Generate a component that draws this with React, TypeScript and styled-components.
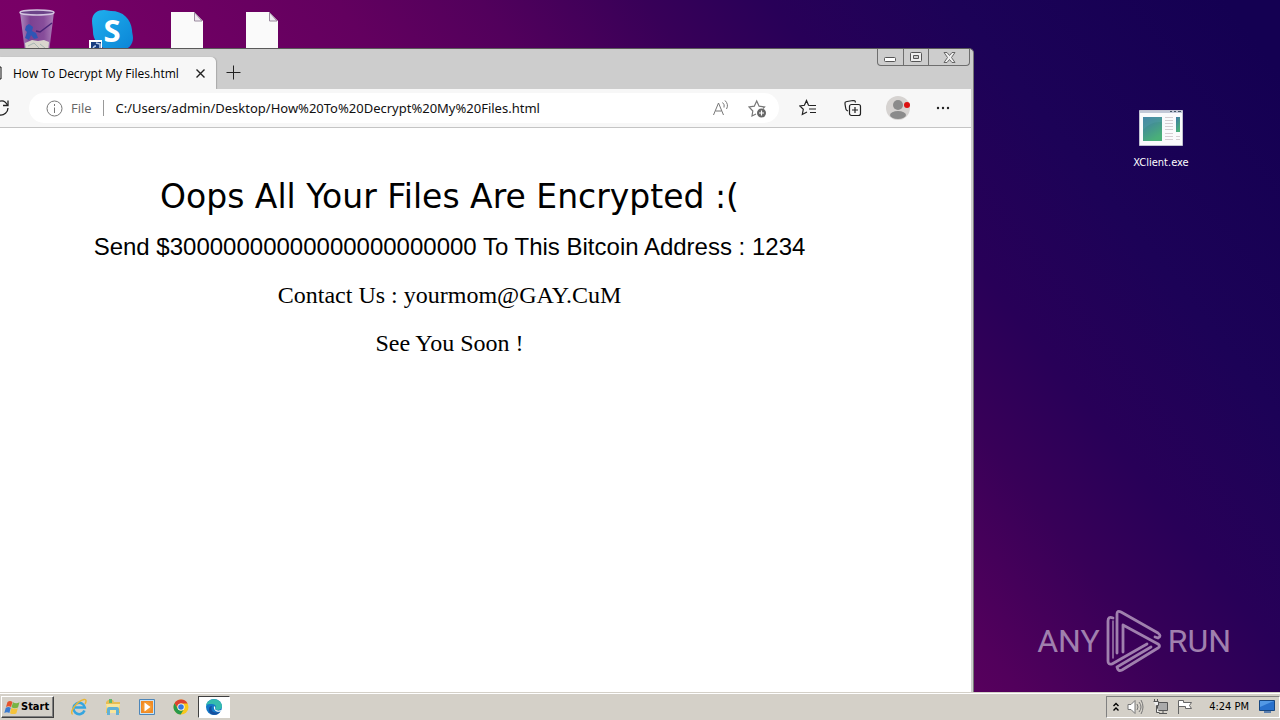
import React from 'react';
import styled, { createGlobalStyle } from 'styled-components';

const Global = createGlobalStyle`
  * { box-sizing: border-box; }
  body { margin: 0; font-family: "Open Sans", sans-serif; font-size: 12px; color: #000; }
  button { font: inherit; color: inherit; border: 0; padding: 0; background: none; }
  svg { display: block; flex-shrink: 0; }
`;

const Screen = styled.div`
  display: flex;
  flex-direction: column;
  height: 100vh;
  overflow: hidden;
`;

const Desktop = styled.main`
  position: relative;
  flex: 1;
  overflow: hidden;
  background: linear-gradient(52deg, #820068 0%, #780066 31%, #63005f 48%, #52005c 56%, #380058 65%, #280058 72%, #1c0257 82%, #140052 97%);
`;

const IconRow = styled.div`
  position: absolute;
  top: 8px;
  left: 16px;
  display: flex;
  gap: 33px;
`;

const IconCell = styled.button`
  display: flex;
  flex-direction: column;
  align-items: center;
  width: 42px;
`;

const AppShortcut = styled.button`
  position: absolute;
  top: 110px;
  right: 90px;
  display: flex;
  flex-direction: column;
  align-items: center;
  gap: 9px;
  width: 58px;
  color: #fff;
  font: 11px/16px "DejaVu Sans Condensed", sans-serif;
`;

const Watermark = styled.div`
  position: absolute;
  right: 49px;
  bottom: 19px;
  display: flex;
  align-items: center;
  gap: 5px;
  color: #a080ae;
  font: 32px/62px Roboto, sans-serif;
`;

const Window = styled.section`
  position: absolute;
  top: 48px;
  bottom: 0;
  left: 0;
  right: 306px;
  display: flex;
  flex-direction: column;
  background: #cdcdcd;
  border-top: 1px solid #5a5a5a;
  border-right: 1px solid #777;
  border-top-right-radius: 5px;
  padding-right: 2px;
`;

const TitleBar = styled.header`
  display: flex;
  height: 40px;
  align-items: flex-end;
`;

const Tab = styled.div`
  display: flex;
  align-items: center;
  width: 216px;
  height: 32px;
  background: #f7f7f7;
  border-top-right-radius: 5px;
  box-shadow: 1px 0 1px #aaa;
`;

const TabTitle = styled.span`
  flex: 1;
  padding-left: 11px;
  white-space: nowrap;
`;

const NewTab = styled.button`
  align-self: flex-end;
  padding: 0 0 9px 10px;
`;

const TabClose = styled.button`
  padding-right: 11px;
`;

const WindowButtons = styled.div`
  display: flex;
  align-self: flex-start;
  margin-left: auto;
  margin-right: 1px;
  border: 1px solid #6e6e6e;
  border-top: 0;
  border-radius: 0 0 4px 4px;
`;

const WindowButton = styled.button<{ $wide?: boolean }>`
  display: flex;
  align-items: center;
  justify-content: center;
  width: ${(p) => (p.$wide ? 41 : 25)}px;
  height: 16px;
  & + & { border-left: 1px solid #6e6e6e; }
`;

const Toolbar = styled.div`
  display: flex;
  align-items: center;
  height: 39px;
  background: #f7f7f7;
  border-bottom: 1px solid #c4c4c4;
`;

const AddressBar = styled.div`
  display: flex;
  flex: 1;
  align-items: center;
  height: 30px;
  margin-left: 19px;
  padding: 0 11px 0 17px;
  border-radius: 15px;
  background: #fff;
  color: #666;
  font-size: 13px;
`;

const Scheme = styled.span`
  margin-left: 8px;
  padding-right: 11px;
  border-right: 1px solid #999;
  line-height: 16px;
`;

const AddressInput = styled.input`
  flex: 1;
  min-width: 0;
  margin-left: 12px;
  padding: 0;
  border: 0;
  outline: 0;
  background: none;
  color: #111;
  font: 13px/20px "Noto Sans", sans-serif;
`;

const AddressActions = styled.div`
  display: flex;
  gap: 14px;
`;

const Tools = styled.div`
  display: flex;
  align-items: center;
  gap: 23px;
  padding: 0 17px 0 18px;
`;

const ToolButton = styled.button`
  display: flex;
  align-items: center;
  justify-content: center;
  width: 22px;
  height: 24px;
`;

const Page = styled.article`
  flex: 1;
  padding: 45px 72px 0 0;
  background: #fff;
  text-align: center;
`;

const Headline = styled.h1`
  margin: 0;
  font: 33px/48px "DejaVu Sans", sans-serif;
`;

const Demand = styled.p`
  margin: 2px 0 0;
  font: 24px/48px "Liberation Sans", sans-serif;
`;

const Note = styled.p`
  margin: 0;
  font: 24px/48px "Liberation Serif", serif;
`;

const Taskbar = styled.footer`
  display: flex;
  align-items: center;
  justify-content: space-between;
  height: 28px;
  padding: 2px 0 0 1px;
  background: #d4d0c8;
  box-shadow: inset 0 1px #d4d0c8, inset 0 2px #fff;
`;

const TaskGroup = styled.div`
  display: flex;
  align-items: center;
`;

const StartButton = styled.button`
  display: flex;
  align-items: center;
  gap: 1px;
  width: 53px;
  height: 22px;
  margin-right: 8px;
  padding-left: 2px;
  border: 1px solid;
  border-color: #fff #404040 #404040 #fff;
  box-shadow: inset -1px -1px #808080;
  font: bold 11px/16px "DejaVu Sans Condensed", sans-serif;
`;

const TaskButton = styled.button<{ $active?: boolean }>`
  display: flex;
  align-items: center;
  justify-content: center;
  width: ${(p) => (p.$active ? 32 : 34)}px;
  height: 22px;
  background: ${(p) => (p.$active ? '#fff' : 'none')};
  border: ${(p) => (p.$active ? '1px solid' : '0')};
  border-color: #404040 #fff #fff #404040;
`;

const Tray = styled.div`
  display: flex;
  align-items: center;
  gap: 8px;
  height: 22px;
  padding: 0 4px 0 6px;
  border: 1px solid;
  border-color: #808080 #fff #fff #808080;
  font: 11px/16px "DejaVu Sans Condensed", sans-serif;
`;

const Clock = styled.time`
  margin: 0 2px 0 8px;
  white-space: nowrap;
`;

const RecycleBin = () => (
  <svg width="42" height="44" viewBox="0 0 42 44">
    <defs>
      <linearGradient id="glass" x1="0" x2="1">
        <stop offset="0" stopColor="#b9a3cf" />
        <stop offset=".3" stopColor="#7d4d99" />
        <stop offset=".7" stopColor="#8a5ba4" />
        <stop offset="1" stopColor="#b597c8" />
      </linearGradient>
    </defs>
    <path d="M4 4h34L33 44H9z" fill="url(#glass)" opacity=".85" />
    <path d="M10 18l3-2 4 3-1 4 4 2 2 5-4 1-3-4-2 5-4-2 2-6-2-2z" fill="#2f55b5" />
    <path d="M20 23l4 1 12-9" fill="none" stroke="#4a2478" strokeWidth="1.500" />
    <path d="M9 35l7-3 6 1 6-1 5 2-1 10H10z" fill="#d9d6ce" />
    <path d="M12 38l6-3 5 5M24 36l5 4" fill="none" stroke="#a8b7b4" />
    <ellipse cx="21" cy="4.500" rx="17" ry="2.500" fill="#6c4489" stroke="#d3c3df" strokeWidth="1.500" />
  </svg>
);

const Skype = () => (
  <svg width="46" height="42" viewBox="0 0 46 42" fontFamily="Open Sans" fontWeight="700">
    <defs>
      <linearGradient id="sky" x2="1" y2="1">
        <stop offset="0" stopColor="#1fb0ee" />
        <stop offset="1" stopColor="#0b84d6" />
      </linearGradient>
    </defs>
    <path d="M3 13C3 5 9 2 15 2c3 0 4 1 7 1 12 0 20 8 21 19 0 3 1 5 1 8 0 7-5 12-12 12H18C9 38 4 31 4 24c0-4-1-7-1-11z" fill="url(#sky)" />
    <text x="23" y="34" fontSize="31" fill="#fff" textAnchor="middle">S</text>
    <path d="M0 32h13v10H0z" fill="#fff" />
    <path d="M2 34h10v8H2z" fill="#173d80" />
    <path d="M4 42c0-3 1-4 3-4M7 35l4 1v4" fill="none" stroke="#b8cdea" strokeWidth="1.500" />
  </svg>
);

const FileIcon = () => (
  <svg width="32" height="44" viewBox="0 0 32 44">
    <path d="M0 4h23l9 9v31H0z" fill="#fafafa" />
    <path d="M23.500 4.500V13H31z" fill="#eee9f0" stroke="#9a8a9e" />
  </svg>
);

const ExeIcon = () => (
  <svg width="44" height="36" viewBox="0 0 44 36">
    <defs>
      <linearGradient id="exe" x1="0" y1="0" x2=".5" y2="1">
        <stop offset="0" stopColor="#3e78a8" />
        <stop offset="1" stopColor="#4ab078" />
      </linearGradient>
    </defs>
    <path d="M.5.5h43v35H.5z" fill="#fafafc" stroke="#bfc0d0" />
    <path d="M1 1h42v2H1z" fill="#c3c9d8" />
    <path d="M31 1.500h2M35 1.500h2M39 1.500h3" stroke="#456" />
    <path d="M4 7h19v24H4z" fill="url(#exe)" />
    <path d="M4 20Q12 11 23 12V7H4z" fill="#549fa7" opacity=".4" />
    <path d="M26 7.500h8M26 10.500h8M26 13.500h8M26 16.500h8M26 19.500h8M26 23.500h8M26 26.500h8M26 29.500h8M37 26.500h4M37 29.500h4" stroke="#d5ced2" />
    <path d="M37 7h4v15h-4z" fill="url(#exe)" />
  </svg>
);

const PlayLogo = () => (
  <svg width="58" height="64" viewBox="0 0 58 64" fill="none" stroke="#a080ae" strokeWidth="2.800" strokeLinejoin="round" strokeLinecap="round">
    <path d="M8 9Q3 7 3 12V52Q3 56 7 55L42 35" />
    <path d="M8 12V49" strokeWidth="1.500" />
    <path d="M12 44V5Q12 1 16 3L53 24Q57 27 53 29L50 28" />
    <path d="M18 43V16L53 35Q56 37 53 39L17 61Q13 63 12 58L46 38" />
  </svg>
);

const Reload = () => (
  <svg width="10" height="20" viewBox="0 0 10 20" fill="none" stroke="#222" strokeWidth="1.300">
    <path d="M0 3.200c3-1 6 1 7.500 4M8 10c0 4-4 7.500-8 7" /><path d="M8 2.500v5H3" />
  </svg>
);

const Explorer = () => (
  <svg width="18" height="18" viewBox="0 0 18 18">
    <path d="M2 4l2-2h5l1 2h6v11H2z" fill="#e8bd54" />
    <path d="M2 6h14l-1 9H3z" fill="#f9e59b" />
    <path d="M3 17V11q0-2 2-2h8q2 0 2 2v6h-3v-5H6v5z" fill="#62b1d5" />
    <path d="M5 1h3v4H5z" fill="#64b769" />
  </svg>
);

const TASKS = [
  {
    name: 'Internet Explorer',
    art: (
      <svg width="18" height="18" viewBox="0 0 18 18" fill="none">
        <path d="M14.500 12.500A5.700 5.700 0 1 1 14.800 9.500H5" stroke="#35a5df" strokeWidth="2.500" />
        <path d="M2.500 16.500C-1 14 7 3 14 1.500c3-.5 2 3 1 4.500" stroke="#e9b634" strokeWidth="1.500" />
      </svg>
    ),
  },
  { name: 'Explorer', art: <Explorer /> },
  {
    name: 'Media Player',
    art: (
      <svg width="18" height="18" viewBox="0 0 18 18">
        <path d="M1.500 1.500h15v15h-15z" fill="#c8e3f5" stroke="#4d86b9" />
        <path d="M3 3h12v12H3z" fill="#f08a24" />
        <circle cx="9" cy="9" r="5" fill="#f59a30" /><path d="M6.500 4.500l6 4.500-6 4.500z" fill="#fff" />
      </svg>
    ),
  },
  {
    name: 'Chrome',
    art: (
      <svg width="16" height="16" viewBox="0 0 16 16">
        <circle cx="8" cy="8" r="7.500" fill="#f8c81c" />
        <path d="M1.500 4.200A7.500 7.500 0 0 1 14.600 4.500H8A3.500 3.500 0 0 0 5 10z" fill="#dc4132" />
        <path d="M1.500 4.200A7.500 7.500 0 0 0 7.700 15.500L11 10a3.500 3.500 0 0 1-6 0z" fill="#27994c" />
        <circle cx="8" cy="8" r="3.600" fill="#fff" /><circle cx="8" cy="8" r="2.800" fill="#3478df" />
      </svg>
    ),
  },
];

export default function App() {
  return (
    <Screen>
      <Global />
      <Desktop>
        <IconRow>
          <IconCell aria-label="Recycle Bin"><RecycleBin /></IconCell>
          <IconCell aria-label="Skype"><Skype /></IconCell>
          <IconCell aria-label="Document"><FileIcon /></IconCell>
          <IconCell aria-label="Document"><FileIcon /></IconCell>
        </IconRow>
        <AppShortcut><ExeIcon />XClient.exe</AppShortcut>
        <Watermark><span>ANY</span><PlayLogo /><span>RUN</span></Watermark>
        <Window>
          <TitleBar>
            <Tab>
              <svg width="2" height="14"><path d="M0 1h1v12H0" fill="none" stroke="#111" /></svg>
              <TabTitle>How To Decrypt My Files.html</TabTitle>
              <TabClose aria-label="Close tab">
                <svg width="9" height="9" viewBox="0 0 9 9"><path d="M.5.5l8 8M8.500.5l-8 8" stroke="#222" strokeWidth="1.400" /></svg>
              </TabClose>
            </Tab>
            <NewTab aria-label="New tab">
              <svg width="15" height="15" viewBox="0 0 15 15"><path d="M7.500.5v14M.5 7.500h14" stroke="#222" /></svg>
            </NewTab>
            <WindowButtons>
              <WindowButton aria-label="Minimize">
                <svg width="13" height="12" viewBox="0 0 13 12"><rect x=".5" y="6.500" width="11" height="4" rx="1" fill="#fff" stroke="#555" /></svg>
              </WindowButton>
              <WindowButton aria-label="Restore">
                <svg width="12" height="10" viewBox="0 0 12 10" stroke="#555"><rect x=".5" y=".5" width="11" height="9" rx="1" fill="#eee" /><path d="M3.500 3.500h5v3h-5z" fill="#ccc" /></svg>
              </WindowButton>
              <WindowButton $wide aria-label="Close">
                <svg width="13" height="11" viewBox="0 0 13 11"><path d="M1 .5h3l2.500 3 2.500-3h3L8.500 5.500l3.500 5H9l-2.500-3-2.500 3H1l3.500-5z" fill="#eee" stroke="#666" /></svg>
              </WindowButton>
            </WindowButtons>
          </TitleBar>
          <Toolbar>
            <button aria-label="Reload"><Reload /></button>
            <AddressBar>
              <svg width="17" height="17" viewBox="0 0 17 17" fill="none" stroke="#777"><circle cx="8.500" cy="8.500" r="7.500" /><path d="M8.500 7.500V13M8.500 4v2" /></svg>
              <Scheme>File</Scheme>
              <AddressInput aria-label="Address" readOnly value="C:/Users/admin/Desktop/How%20To%20Decrypt%20My%20Files.html" />
              <AddressActions>
                <ToolButton aria-label="Read aloud">
                  <svg width="18" height="18" viewBox="0 0 18 18" fill="none" stroke="#777"><path d="M1.500 16L6.500 4l5 12M3.500 12h6M10.500 3.500q2.500 2 1.500 5M13 1.500q4 4 1.500 8.500" /></svg>
                </ToolButton>
                <ToolButton aria-label="Add to favorites">
                  <svg width="19" height="19" viewBox="0 0 19 19" fill="none" stroke="#777" strokeWidth="1.200"><path d="M8 15l-4 2 .8-5L1 8l5.300-.8L8.700 2l2.400 5.200 5.400.8-1.500 1.500" /><circle cx="13.500" cy="14" r="4.500" fill="#666" stroke="none" /><path d="M11 14h5M13.500 11.500v5" stroke="#fff" /></svg>
                </ToolButton>
              </AddressActions>
            </AddressBar>
            <Tools>
              <ToolButton aria-label="Favorites">
                <svg width="18" height="18" viewBox="0 0 18 18" fill="none" stroke="#222" strokeWidth="1.200"><path d="M11 6.500L9.500 6.300 7.500 1.500 5.400 6.300l-4.600.6L4.300 10.300 3.300 15.500 8 13M11 6.500h6M10 10h7M11 13.500h6" /></svg>
              </ToolButton>
              <ToolButton aria-label="Collections">
                <svg width="18" height="18" viewBox="0 0 18 18" fill="none" stroke="#222" strokeWidth="1.200"><path d="M4 12C2 11 2 11 1.500 8L1 5c0-2 0-2 2-2.500l6-1c2 0 2 0 2.500 2" /><rect x="5.500" y="5.500" width="11" height="11" rx="2" /><path d="M11 8v6M8 11h6" /></svg>
              </ToolButton>
              <ToolButton aria-label="Profile">
                <svg width="24" height="24" viewBox="0 0 24 24"><circle cx="12" cy="12" r="12" fill="#d6d3d1" /><circle cx="12" cy="9" r="5" fill="#8b8b8b" /><ellipse cx="12" cy="19" rx="8" ry="4" fill="#8b8b8b" /><circle cx="21" cy="9" r="3" fill="#dc1111" /></svg>
              </ToolButton>
              <ToolButton aria-label="More">
                <svg width="14" height="4" viewBox="0 0 14 4" fill="#222"><circle cx="2" cy="2" r="1.200" /><circle cx="7" cy="2" r="1.200" /><circle cx="12" cy="2" r="1.200" /></svg>
              </ToolButton>
            </Tools>
          </Toolbar>
          <Page>
            <Headline>Oops All Your Files Are Encrypted :(</Headline>
            <Demand>Send $30000000000000000000000 To This Bitcoin Address : 1234</Demand>
            <Note>Contact Us : yourmom@GAY.CuM</Note>
            <Note>See You Soon !</Note>
          </Page>
        </Window>
      </Desktop>
      <Taskbar>
        <TaskGroup>
          <StartButton>
            <svg width="16" height="15" viewBox="0 0 16 15"><path d="M3.500 2q2.500-2 5 0L7 7Q4.500 5.500 2 7z" fill="#e5532c" /><path d="M9 2.300q3 1.700 6.500 0L14 7.500q-3.500 1.500-6.500-.2z" fill="#78b443" /><path d="M1.800 7.700q2.700-1.500 5 0L5.400 13Q3 11.500.3 13z" fill="#3a7bd0" /><path d="M7.300 8q3 1.500 6.500.2L12.300 13.500q-3.300 1.300-6.300-.3z" fill="#f5c33a" /></svg>
            Start
          </StartButton>
          {TASKS.map((t) => <TaskButton key={t.name} aria-label={t.name}>{t.art}</TaskButton>)}
          <TaskButton $active aria-label="Edge">
            <svg width="18" height="18" viewBox="0 0 18 18"><circle cx="9" cy="9" r="8" fill="#1378c8" /><path d="M1 8C2-1 16-1 17 8c0 4-5 5-7 3 2-3 0-5-3-5S2 6 1 8z" fill="#35bcae" /><path d="M7 8c-2 4 1 8 8 6-4 5-12 3-11-3 0-2 1-3 3-3z" fill="#154f9e" /><path d="M9 8c2 1 1 3 1 3 1 2 5 2 6 1l1 1c-4 2-9 0-8-5z" fill="#fff" /></svg>
          </TaskButton>
        </TaskGroup>
        <Tray>
          <svg width="6" height="10" viewBox="0 0 6 10" fill="none" stroke="#000" strokeWidth="1.400"><path d="M.5 4L3 1.500 5.500 4M.5 8.500L3 6l2.500 2.500" /></svg>
          <svg width="17" height="16" viewBox="0 0 17 16" fill="none" stroke="#777"><path d="M1 5.500h3l4-4v13l-4-4H1z" fill="#fff" /><path d="M10 5q2 3 0 6M12 3q4 5 0 10M14 1q4 7 0 14" /></svg>
          <svg width="17" height="16" viewBox="0 0 17 16" stroke="#555"><path d="M5.500 3.500h10v8h-10zM7 14.500h8M11 12v2" fill="#aaa" /><path d="M1.500 2.500h5v4h-2v7h3M2.500 0v2M5.500 0v2" fill="#eee" /></svg>
          <svg width="16" height="16" viewBox="0 0 16 16" stroke="#666" fill="#fff"><path d="M1.500 15V1.500h5v2h8l-2 3 2 3h-6v-2h-7" /></svg>
          <Clock>4:24 PM</Clock>
          <svg width="16" height="14" viewBox="0 0 16 14"><path d="M.5.5h15v10H.5z" fill="#2870cc" stroke="#174781" /><path d="M1 1h14L1 7z" fill="#5298e5" /><path d="M5 12h7" stroke="#5c7faf" strokeWidth="2" /></svg>
        </Tray>
      </Taskbar>
    </Screen>
  );
}
